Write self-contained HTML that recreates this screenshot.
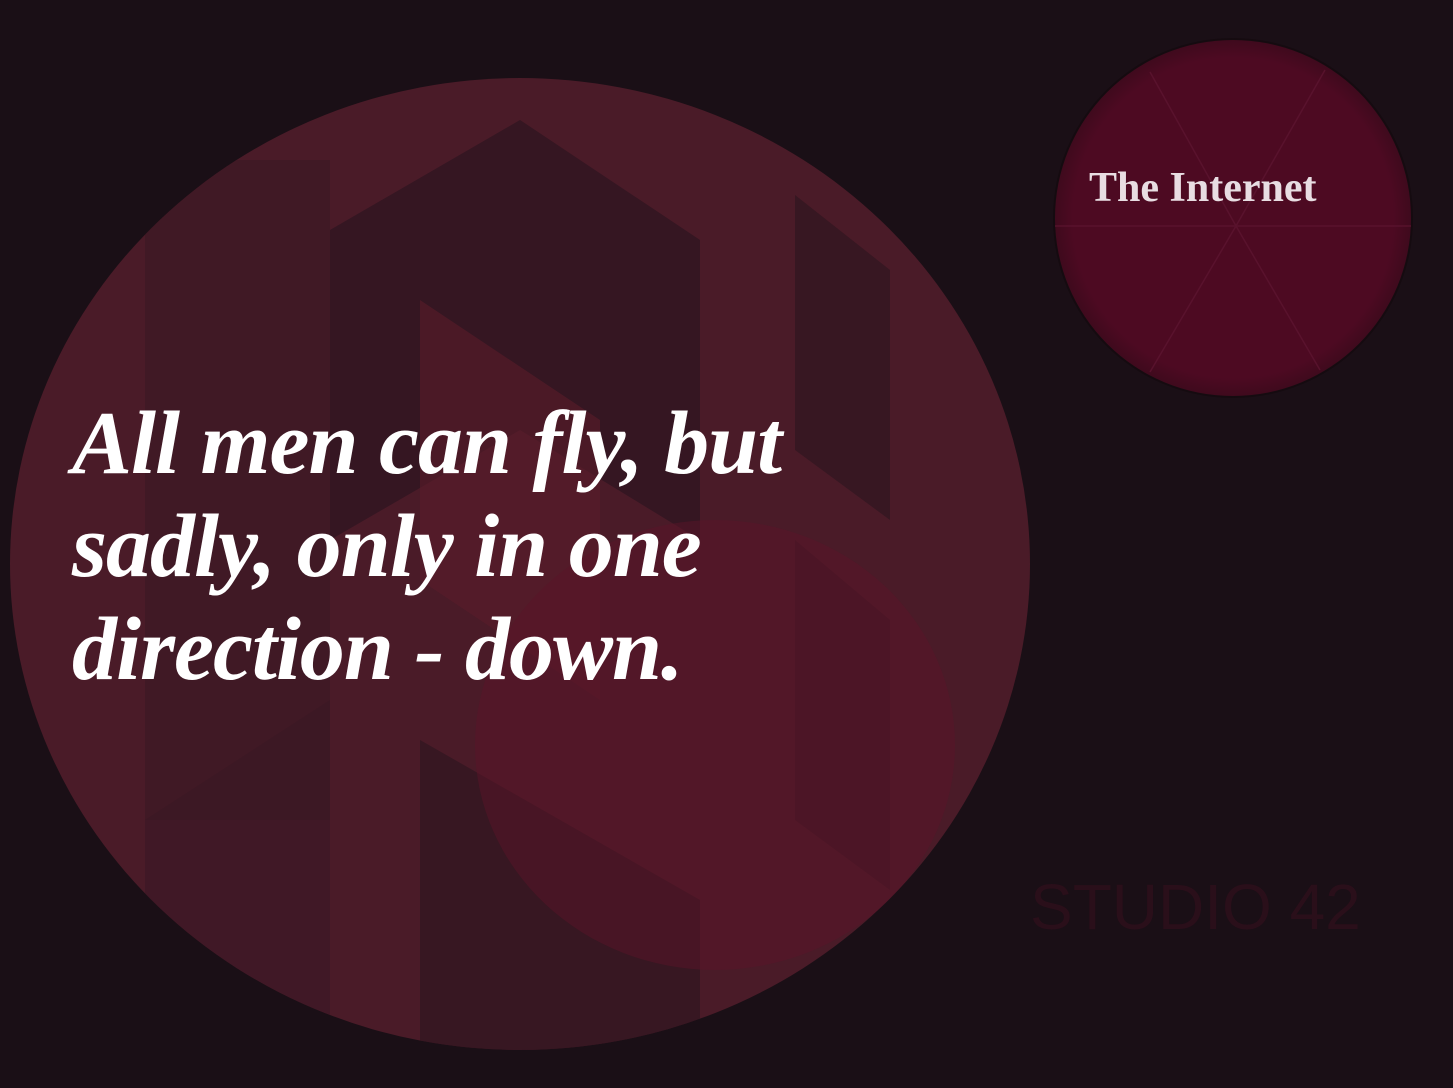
<!DOCTYPE html>
<html><head><meta charset="utf-8"><style>
html,body{margin:0;padding:0;background:#1a0f16;width:1453px;height:1088px;overflow:hidden;position:relative}
svg{position:absolute;left:0;top:0}
.q{position:absolute;left:72px;top:392px;font-family:"Liberation Serif",serif;font-style:italic;font-weight:bold;font-size:90px;line-height:103px;color:#fff;letter-spacing:-1px;width:950px;white-space:nowrap}
.net{position:absolute;left:1089px;top:164px;font-family:"Liberation Serif",serif;font-size:42px;font-weight:bold;color:#e8dde2;letter-spacing:0px}
.studio{position:absolute;left:1030px;top:870px;font-family:"Liberation Sans",sans-serif;font-size:64px;color:#2a0f1a}
</style></head><body>
<svg width="1453" height="1088" viewBox="0 0 1453 1088">
<defs>
<clipPath id="c"><ellipse cx="520" cy="564" rx="510" ry="486"/></clipPath>
<radialGradient id="g2" cx="0.5" cy="0.5" r="0.5"><stop offset="0.9" stop-color="#4d0a22"/><stop offset="1" stop-color="#3f0a1d"/></radialGradient>
</defs>
<ellipse cx="520" cy="564" rx="510" ry="486" fill="#4a1b28"/>
<g clip-path="url(#c)">
<polygon points="145,160 330,160 330,820 145,820" fill="#3c1824" opacity="0.7"/>
<polygon points="330,230 520,120 700,240 700,540 520,430 330,540" fill="#2f1520" opacity="0.8"/>
<polygon points="420,300 600,420 600,700 420,580" fill="#5a1c2a" opacity="0.6"/>
<polygon points="795,195 890,270 890,520 795,450" fill="#2f1520" opacity="0.7"/>
<polygon points="795,540 890,620 890,890 795,820" fill="#3a1522" opacity="0.7"/>
<polygon points="145,820 330,700 330,1050 145,1050" fill="#3b1824" opacity="0.6"/>
<polygon points="420,740 700,900 700,1060 420,1060" fill="#2f1520" opacity="0.7"/>
<ellipse cx="715" cy="745" rx="240" ry="225" fill="#5a1428" opacity="0.5"/>
</g>
<circle cx="1233" cy="218" r="180" fill="#12080d" opacity="0.6"/>
<circle cx="1233" cy="218" r="178" fill="url(#g2)"/>
<g stroke="#5c1530" stroke-width="1.5" opacity="0.8">
<line x1="1055" y1="226" x2="1411" y2="226"/>
<line x1="1236" y1="226" x2="1325" y2="70"/>
<line x1="1236" y1="226" x2="1150" y2="372"/>
<line x1="1236" y1="226" x2="1320" y2="370"/>
<line x1="1236" y1="226" x2="1150" y2="72"/>
</g>
</svg>
<div class="net">The Internet</div>
<div class="q">All men can fly, but<br>sadly, only in one<br>direction - down.</div>
<div class="studio">STUDIO 42</div>
</body></html>
